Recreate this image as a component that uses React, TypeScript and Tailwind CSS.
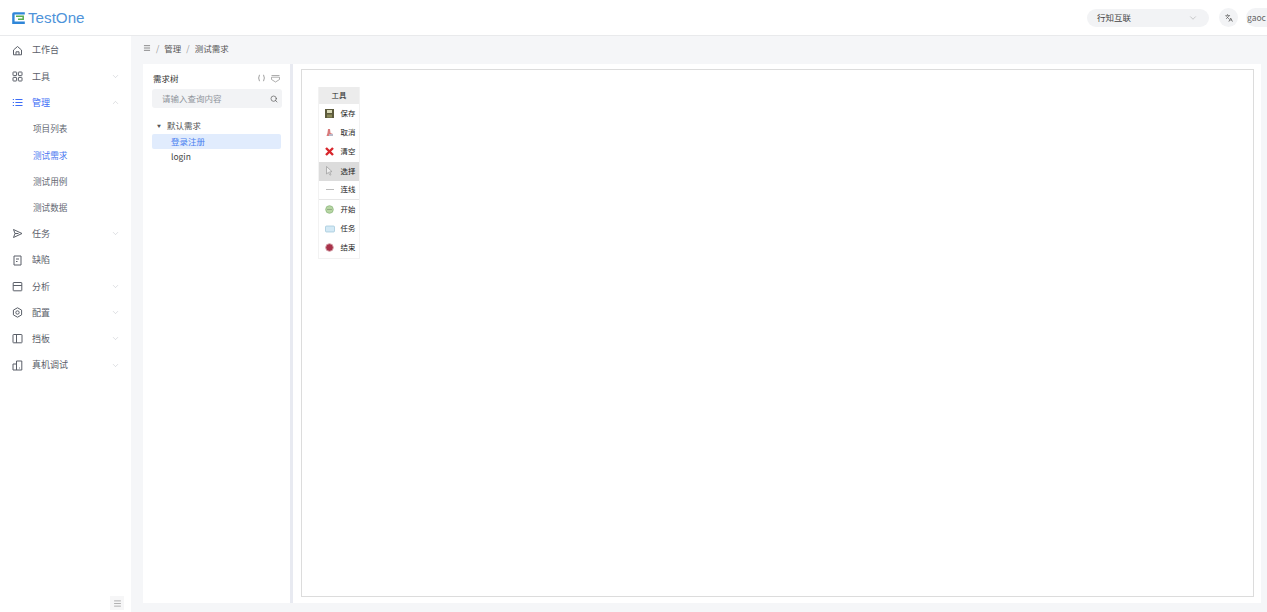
import React from "react";
import { ChevronDown, ChevronUp, Search, Languages, Menu } from "lucide-react";

const font = { fontFamily: '"Noto Sans CJK SC", "Liberation Sans", sans-serif' };

function Svg({ children, color = "#5a5f68" }: { children: React.ReactNode; color?: string }) {
  return (
    <svg width="11" height="11" viewBox="0 0 11 11" fill="none" stroke={color} strokeWidth="1">
      {children}
    </svg>
  );
}

function Row({ icon, label, chevron, active }: { icon?: React.ReactNode; label: string; chevron?: "up" | "down"; active?: boolean }) {
  return (
    <div className={`h-[26.25px] flex items-center pl-[12px] pr-[11px] text-[9px] ${active ? "text-[#3b6cf6]" : "text-[#5b606a]"}`}>
      <span className="w-[20px] flex items-center">{icon}</span>
      <span className="flex-1">{label}</span>
      {chevron === "down" && <ChevronDown size={9} strokeWidth={1} className="text-[#a8adb5]" />}
      {chevron === "up" && <ChevronUp size={9} strokeWidth={1} className="text-[#a8adb5]" />}
    </div>
  );
}

function Sub({ label, active }: { label: string; active?: boolean }) {
  return <div className={`h-[26.25px] flex items-center pl-[33px] text-[8.6px] ${active ? "text-[#4a78f0]" : "text-[#646973]"}`}><span>{label}</span></div>;
}

function Tool({ icon, label, selected, line }: { icon: React.ReactNode; label: string; selected?: boolean; line?: boolean }) {
  return (
    <div className={`h-[19.2px] flex items-center pl-[6px] text-[7.4px] text-[#222] ${selected ? "bg-[#dcdcdc]" : "bg-white"} ${line ? "border-b border-[#e6e6e6]" : ""}`}>
      <span className="w-[15.5px] flex items-center justify-start">{icon}</span>
      <span className="relative top-[-1px]">{label}</span>
    </div>
  );
}

export default function App() {
  return (
    <div style={font} className="w-[1267px] h-[612px] overflow-hidden bg-[#f5f6f8] flex flex-col">
      <header className="h-[36px] shrink-0 bg-white border-b border-[#e9eaec] flex items-center pl-[12px] overflow-hidden">
        <svg width="13" height="12" viewBox="0 0 13 12">
          <path d="M0.2 12V2Q0.2 0.3 2 0.3H12.8V2.4H2.6V9.6H12.8V12Z" fill="#2f86d8" />
          <path d="M4 4.2H11.2V7.2H6" fill="none" stroke="#58ad4f" strokeWidth="1.5" />
        </svg>
        <span style={{ fontFamily: '"Liberation Sans", sans-serif' }} className="ml-[3px] text-[15.2px] text-[#4f93da] leading-none">TestOne</span>
        <div className="flex-1" />
        <div className="w-[122px] h-[18px] rounded-full bg-[#f2f3f5] flex items-center pl-[10px] pr-[11px] text-[8.5px] text-[#444]">
          <span className="flex-1">行知互联</span>
          <ChevronDown size={10} strokeWidth={1} className="text-[#888]" />
        </div>
        <div className="ml-[10px] w-[19px] h-[19px] rounded-full bg-[#f2f3f5] flex items-center justify-center">
          <Languages size={8} className="text-[#555]" />
        </div>
        <div className="ml-[8px] w-[30px] h-[19px] shrink-0 rounded-l-full bg-[#f2f3f5] pl-[1px] flex items-center text-[8.5px] text-[#666] mr-[-9px]">gaoc</div>
      </header>
      <div className="flex-1 flex min-h-0">
        <aside className="w-[131px] shrink-0 bg-white flex flex-col pt-[1px]">
          <Row icon={<Svg><path d="M1.5 5L5.5 1.5L9.5 5V9.8H1.5Z" /><path d="M4 9.8V6.8H7V9.8" /></Svg>} label="工作台" />
          <Row icon={<Svg><rect x="1" y="1" width="3.6" height="3.6" rx=".5" /><rect x="6.4" y="1" width="3.6" height="3.6" rx=".5" /><rect x="1" y="6.4" width="3.6" height="3.6" rx=".5" /><rect x="6.4" y="6.4" width="3.6" height="3.6" rx=".5" /></Svg>} label="工具" chevron="down" />
          <Row icon={<Svg color="#3b6cf6"><path d="M3.4 2.5H10.5M3.4 5.5H10.5M3.4 8.5H10.5M.8 2.5H2M.8 5.5H2M.8 8.5H2" /></Svg>} label="管理" chevron="up" active />
          <Sub label="项目列表" />
          <Sub label="测试需求" active />
          <Sub label="测试用例" />
          <Sub label="测试数据" />
          <Row icon={<Svg><path d="M1.5 1.5L10 5.5L1.5 9.5L3 5.5Z" /><path d="M3 5.5H6.5" /></Svg>} label="任务" chevron="down" />
          <Row icon={<Svg><path d="M2 1H9V10H2Z" /><path d="M4 4H7M4 6.5H5.5" /></Svg>} label="缺陷" />
          <Row icon={<Svg><rect x="1.2" y="1.5" width="8.6" height="8.3" rx=".5" /><path d="M1.2 4.5H9.8" /></Svg>} label="分析" chevron="down" />
          <Row icon={<Svg><path d="M5.5 .8L9.6 3.1V7.9L5.5 10.2L1.4 7.9V3.1Z" /><circle cx="5.5" cy="5.5" r="1.7" /></Svg>} label="配置" chevron="down" />
          <Row icon={<Svg><rect x="1" y="1.5" width="9" height="8.3" rx=".5" /><path d="M4.5 1.5V9.8" /></Svg>} label="挡板" chevron="down" />
          <Row icon={<Svg><path d="M4.5 4H1V10H9.8V1H4.5V10" /><path d="M7 8H7.8" /></Svg>} label="真机调试" chevron="down" />
          <div className="flex-1" />
          <div className="flex justify-end pr-[7px] pb-[2px]">
            <div className="w-[14px] h-[14px] bg-[#f6f6f7] flex items-center justify-center">
              <Menu size={9} className="text-[#999]" />
            </div>
          </div>
        </aside>
        <main className="flex-1 min-w-0 flex flex-col">
          <div className="h-[24px] mb-[4px] shrink-0 flex items-center pl-[12px] text-[8.5px] text-[#555]">
            <Menu size={8} className="text-[#555]" />
            <span className="mx-[5px] text-[#999]">/</span>
            <span>管理</span>
            <span className="mx-[5px] text-[#999]">/</span>
            <span>测试需求</span>
          </div>
          <div className="flex-1 flex pl-[12px] pr-[6px] pb-[9px] min-h-0">
            <section className="w-[147px] shrink-0 bg-white px-[9px] pt-[8px]">
              <div className="h-[12px] flex items-center text-[8.5px] text-[#333]">
                <span className="flex-1 pl-[1px]">需求树</span>
                <svg width="9" height="8" viewBox="0 0 9 8" fill="none" stroke="#888" strokeWidth="0.8" className="mr-[5px]">
                  <path d="M2.5 .8Q.8 4 2.5 7.2M6.5 .8Q8.2 4 6.5 7.2" />
                </svg>
                <svg width="9" height="9" viewBox="0 0 9 9" fill="none" stroke="#999" strokeWidth="0.8" className="mr-[1px]">
                  <path d="M.5 1.5H8.5M.5 3.2H8.5V5.5L4.5 8L.5 5.5Z" />
                </svg>
              </div>
              <div className="mt-[5px] h-[19px] rounded-[3px] bg-[#f2f3f5] flex items-center pl-[10px] pr-[4px] text-[8.5px] text-[#8f949c] w-[130px]">
                <span className="flex-1">请输入查询内容</span>
                <Search size={8} className="text-[#555]" />
              </div>
              <div className="mt-[10px] w-[129px]">
                <div className="h-[16px] flex items-center text-[8.5px] text-[#555]">
                  <span className="w-[6px] ml-[5px] mr-[4px] text-[4px] leading-none">▼</span>
                  <span className="relative top-[-0.5px]">默认需求</span>
                </div>
                <div className="h-[15px] rounded-[2px] bg-[#e1ecfd] flex items-center pl-[19px] text-[8.5px] text-[#4a80f0]"><span className="relative top-[-0.5px]">登录注册</span></div>
                <div className="h-[15px] flex items-center pl-[19px] text-[8.5px] text-[#444]">login</div>
              </div>
            </section>
            <div className="w-[3px] shrink-0 bg-[#e8eaf1]" />
            <section className="flex-1 min-w-0 bg-white pl-[8px] pr-[7px] pt-[5px] pb-[6px]">
              <div className="h-full border border-[#dcdcdc] pl-[17px] pt-[17px]">
                <div className="w-[42px] border border-[#f2f2f2] border-t-0 ml-[-1px]">
                  <div className="h-[17px] bg-[#ececec] flex items-center justify-center text-[7.4px] text-[#222]"><span className="relative top-[-0.5px]">工具</span></div>
                  <Tool label="保存" icon={
                    <svg width="9" height="9" viewBox="0 0 9 9"><rect width="9" height="9" fill="#5c5a3c" /><rect x="2" y="1" width="5" height="3" fill="#d9d9b8" /><rect x="2" y="5.5" width="5" height="3" fill="#8b8a5a" /></svg>
                  } />
                  <Tool label="取消" icon={
                    <svg width="9" height="9" viewBox="0 0 9 9"><path d="M3 1L5 1L5.5 5L8 6V8H1.5L2.5 5Z" fill="#d97a7a" /><path d="M4 6H8V8H4Z" fill="#b9b9c9" /></svg>
                  } />
                  <Tool label="清空" icon={
                    <svg width="9" height="9" viewBox="0 0 9 9" stroke="#d8262c" strokeWidth="2.4"><path d="M1 1L8 8M8 1L1 8" /></svg>
                  } />
                  <Tool label="选择" selected icon={
                    <svg width="9" height="10" viewBox="0 0 9 10" fill="#eee" stroke="#999" strokeWidth="0.7"><path d="M1.5 0.5V8L3.4 6.4L5 9.2L6 8.6L4.6 5.9L7 5.6Z" /></svg>
                  } />
                  <Tool label="连线" line icon={
                    <svg width="10" height="5" viewBox="0 0 10 5" stroke="#aaa" strokeWidth="0.8"><path d="M1 2.5H9" /></svg>
                  } />
                  <Tool label="开始" icon={
                    <svg width="9" height="9" viewBox="0 0 9 9"><circle cx="4.5" cy="4.5" r="3.8" fill="#b7d6a3" stroke="#8fb982" strokeWidth="0.8" /><rect x="2" y="4" width="5" height="1" fill="#93ad85" /></svg>
                  } />
                  <Tool label="任务" icon={
                    <svg width="10" height="8" viewBox="0 0 10 8"><rect x="0.5" y="1" width="9" height="6" rx="1" fill="#d3e9f5" stroke="#9cc4d8" strokeWidth="0.7" /></svg>
                  } />
                  <Tool label="结束" icon={
                    <svg width="9" height="9" viewBox="0 0 9 9"><circle cx="4.5" cy="4.5" r="3.8" fill="#a8324a" stroke="#d4a0a8" strokeWidth="0.9" /></svg>
                  } />
                </div>
              </div>
            </section>
          </div>
        </main>
      </div>
    </div>
  );
}
